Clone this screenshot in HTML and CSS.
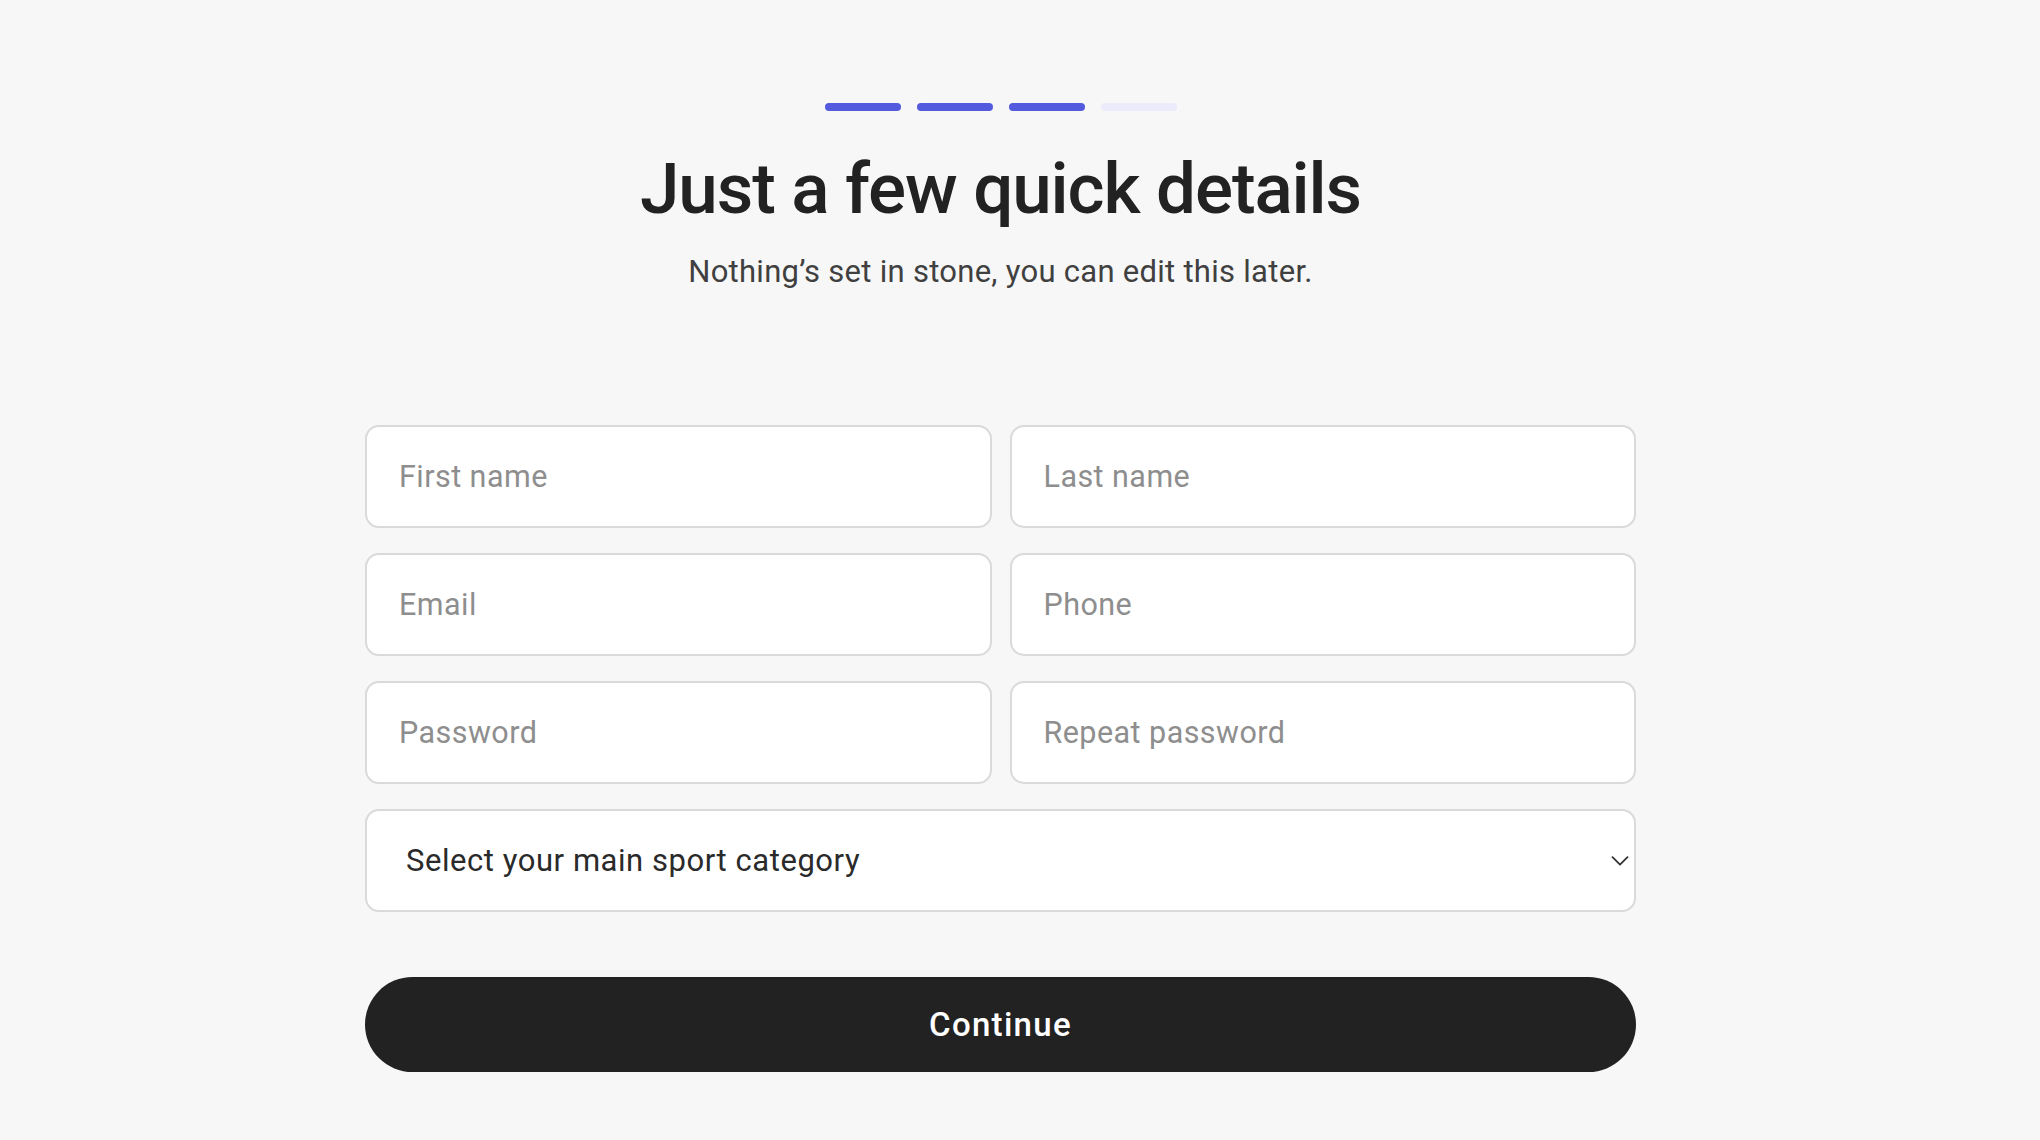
FILE: index.html
```html
<!DOCTYPE html>
<html lang="en">
<head>
<meta charset="utf-8">
<title>Just a few quick details</title>
<link rel="stylesheet" href="styles.css">
</head>
<body>
<main class="page">
  <div class="steps">
    <span class="step done"></span>
    <span class="step done"></span>
    <span class="step done"></span>
    <span class="step"></span>
  </div>
  <h1 class="title">Just a few quick details</h1>
  <p class="subtitle">Nothing’s set in stone, you can edit this later.</p>
  <form class="form">
    <div class="grid">
      <input class="field" type="text" placeholder="First name">
      <input class="field" type="text" placeholder="Last name">
      <input class="field" type="email" placeholder="Email">
      <input class="field" type="tel" placeholder="Phone">
      <input class="field" type="password" placeholder="Password">
      <input class="field" type="password" placeholder="Repeat password">
      <div class="select-wrap">
        <select class="field select">
          <option>Select your main sport category</option>
        </select>
        <svg class="chevron" width="18" height="10" viewBox="0 0 18 10" aria-hidden="true">
          <path d="M1.5 1.2 L9 8.6 L16.5 1.2" fill="none" stroke="#333" stroke-width="1.8" stroke-linecap="round" stroke-linejoin="round"/>
        </svg>
      </div>
    </div>
    <button class="continue" type="button">Continue</button>
  </form>
</main>
</body>
</html>
```

FILE: styles.css
```css
* { box-sizing: border-box; }

html, body {
  margin: 0;
  padding: 0;
  background: #f7f7f7;
}

body {
  font-family: Roboto, "Liberation Sans", Arial, sans-serif;
  color: #222;
}

.page {
  display: flex;
  flex-direction: column;
  align-items: center;
  padding: 103px 39px 0 0;
}

.steps {
  display: flex;
  gap: 16px;
}

.step {
  display: block;
  width: 76px;
  height: 8px;
  border-radius: 4px;
  background: #ebebfb;
}

.step.done {
  background: #545ade;
}

.title {
  margin: 35px 0 0;
  font-size: 71px;
  line-height: 1.2;
  font-weight: 500;
  letter-spacing: -1.1px;
  color: #222;
}

.subtitle {
  margin: 21px 0 0;
  font-size: 31px;
  line-height: 1.3;
  font-weight: 400;
  letter-spacing: 0.28px;
  color: #404040;
}

.form {
  width: 1271px;
  margin-top: 133px;
  display: flex;
  flex-direction: column;
  gap: 65px;
}

.grid {
  display: grid;
  grid-template-columns: 1fr 1fr;
  column-gap: 18px;
  row-gap: 25px;
}

.field {
  width: 100%;
  height: 103px;
  border: 2px solid #dadada;
  border-radius: 14px;
  background: #fff;
  padding: 0 30px 0 32px;
  font-family: Roboto, "Liberation Sans", Arial, sans-serif;
  font-size: 30.5px;
  letter-spacing: 0.45px;
  color: #222;
  outline: none;
}

.field::placeholder {
  color: #8e8e8e;
}

.select-wrap {
  grid-column: 1 / -1;
  position: relative;
}

.select {
  appearance: none;
  -webkit-appearance: none;
  padding-left: 39px;
  font-size: 31px;
  letter-spacing: 0.55px;
  color: #2a2a2a;
}

.chevron {
  position: absolute;
  right: 7px;
  top: 47px;
  pointer-events: none;
}

.continue {
  width: 100%;
  height: 95px;
  border: none;
  border-radius: 48px;
  background: #222;
  color: #fff;
  font-family: Roboto, "Liberation Sans", Arial, sans-serif;
  font-size: 33px;
  font-weight: 500;
  letter-spacing: 1.3px;
  cursor: pointer;
}
```
